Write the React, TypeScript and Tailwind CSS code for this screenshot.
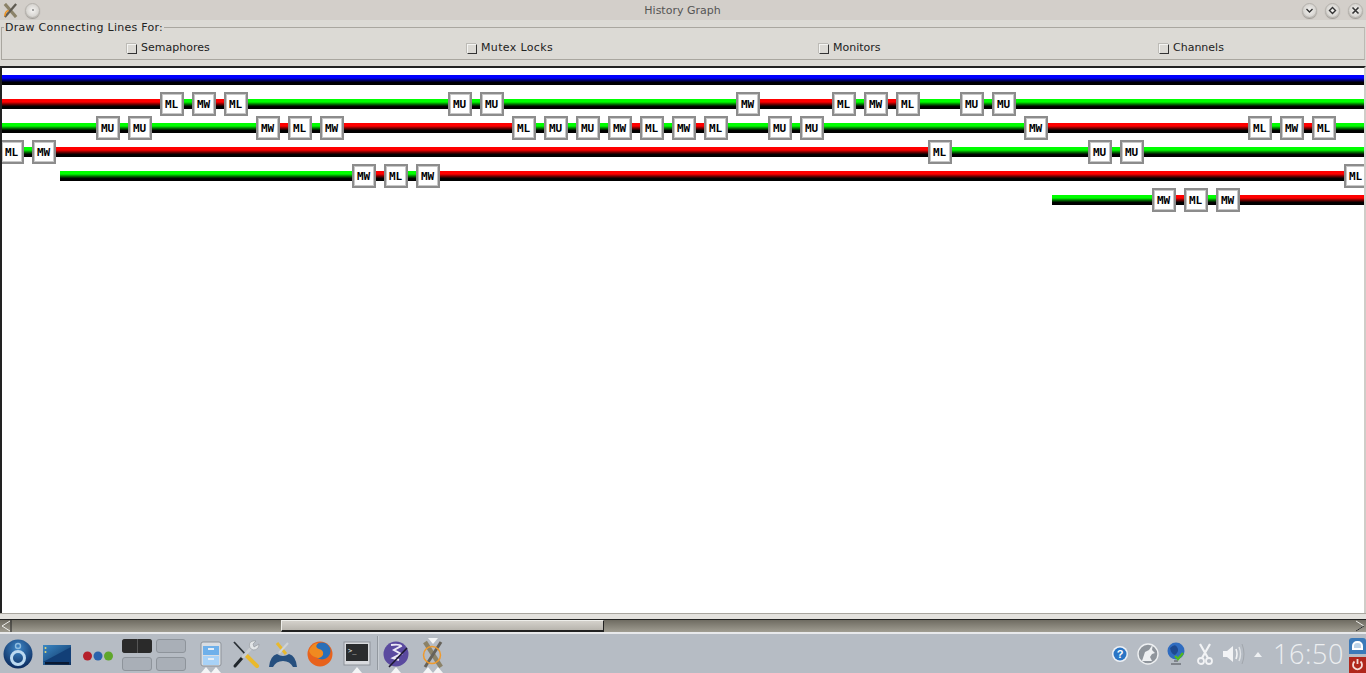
import React from 'react'

type Op = 'ML' | 'MW' | 'MU'
type Lane = { start: number; first: 'red' | 'green'; nodes: [Op, number][] }

const CANVAS_WIDTH = 1366

const lanes: Lane[] = [
  {
    start: 0,
    first: 'red',
    nodes: [['ML', 160], ['MW', 192], ['ML', 224], ['MU', 448], ['MU', 480], ['MW', 736], ['ML', 832], ['MW', 864], ['ML', 896], ['MU', 960], ['MU', 992]],
  },
  {
    start: 0,
    first: 'green',
    nodes: [['MU', 96], ['MU', 128], ['MW', 256], ['ML', 288], ['MW', 320], ['ML', 512], ['MU', 544], ['MU', 576], ['MW', 608], ['ML', 640], ['MW', 672], ['ML', 704], ['MU', 768], ['MU', 800], ['MW', 1024], ['ML', 1248], ['MW', 1280], ['ML', 1312]],
  },
  {
    start: 0,
    first: 'green',
    nodes: [['ML', 0], ['MW', 32], ['ML', 928], ['MU', 1088], ['MU', 1120]],
  },
  {
    start: 60,
    first: 'green',
    nodes: [['MW', 352], ['ML', 384], ['MW', 416], ['ML', 1344]],
  },
  {
    start: 1052,
    first: 'green',
    nodes: [['MW', 1152], ['ML', 1184], ['MW', 1216]],
  },
]

function LaneRow({ lane }: { lane: Lane }) {
  const segments: { left: number; width: number; color: string }[] = []
  let from = lane.start
  let color: string = lane.first
  for (const [op, x] of lane.nodes) {
    segments.push({ left: from, width: x - from, color })
    from = x
    color = op === 'MW' ? 'red' : 'green'
  }
  segments.push({ left: from, width: CANVAS_WIDTH - from, color })

  return (
    <div className="relative h-6 shrink-0">
      {segments.map((s) => (
        <div
          key={s.left}
          className={`absolute top-[7px] h-[10px] ${s.color === 'red' ? 'bg-linear-to-b from-[#ff0000] from-30% to-black to-80%' : 'bg-linear-to-b from-[#00ff00] from-30% to-black to-80%'}`}
          style={{ left: s.left, width: s.width }}
        />
      ))}
      {lane.nodes.map(([op, x]) => (
        <div
          key={x}
          className="absolute top-0 h-6 w-6 border-2 border-[#8c8c8c] bg-white"
          style={{ left: x }}
        >
          <div className="flex h-full w-full items-center justify-center border border-[#c8c8c8] pr-px font-['DejaVu_Sans_Mono',monospace] text-[11px] leading-none font-bold text-black">
            {op}
          </div>
        </div>
      ))}
    </div>
  )
}

function RoundButton({ children }: { children?: React.ReactNode }) {
  return (
    <div className="flex h-[15px] w-[15px] items-center justify-center rounded-full border border-[#b5b2ad] bg-radial from-[#f4f3f1] to-[#c9c6c1] shadow-[0_1px_1px_#9a9792]">
      {children}
    </div>
  )
}

function Option({ label, wide }: { label: string; wide?: boolean }) {
  return (
    <div className="flex items-center">
      <span className="mr-[4px] h-[10px] w-[10px] shrink-0 border border-t-[#f4f4f2] border-l-[#f4f4f2] border-r-[#333] border-b-[#333] bg-[#dcdad5] shadow-[-1px_-1px_0_#bdbbb6]" />
      <span className={wide ? 'tracking-[0.35px]' : ''}>{label}</span>
    </div>
  )
}

function AppX({ size = 16 }: { size?: number }) {
  return (
    <svg width={size} height={size} viewBox="0 0 16 16">
      <path d="M2 1 L14 15" stroke="#8b8268" strokeWidth="3.4" />
      <path d="M14 1 L2 15" stroke="#5f5b52" strokeWidth="2.4" />
      <path d="M2 14 Q2 9 6 8" stroke="#f0921e" strokeWidth="1.6" fill="none" />
    </svg>
  )
}

function Tri({ x, y = 0 }: { x: number; y?: number }) {
  return <path d={`M${x - 5} ${40 + y} L${x} ${34 + y} L${x + 5} ${40 + y} Z`} fill="#f4f5f6" />
}

function Taskbar() {
  return (
    <div className="h-[39px] shrink-0 bg-[#b6bcc4]">
      <div className="-mt-px flex h-10 items-center">
        <svg width="32" height="40" viewBox="0 0 32 40" className="ml-[2px] shrink-0">
          <defs>
            <radialGradient id="orb" cx="0.5" cy="0.3" r="0.7">
              <stop offset="0" stopColor="#3f88c8" />
              <stop offset="1" stopColor="#0a2a5e" />
            </radialGradient>
          </defs>
          <circle cx="16" cy="21" r="14.5" fill="url(#orb)" />
          <circle cx="16" cy="25" r="6.5" fill="none" stroke="#bcd9f0" strokeWidth="3" />
          <circle cx="16" cy="13" r="2.5" fill="none" stroke="#8fbde0" strokeWidth="1.4" />
        </svg>
        <svg width="30" height="40" viewBox="0 0 30 40" className="ml-[8px] shrink-0">
          <defs>
            <linearGradient id="desk" x1="0" y1="0" x2="1" y2="1">
              <stop offset="0" stopColor="#3a87c4" />
              <stop offset="1" stopColor="#0c2f5e" />
            </linearGradient>
          </defs>
          <rect x="1" y="12" width="28" height="20" fill="url(#desk)" />
          <path d="M1 29 L29 14 L29 29 Z" fill="#123f77" />
          <rect x="3" y="29" width="24" height="2.5" fill="#0a1a33" />
          <circle cx="3.5" cy="15" r="1" fill="#e0d77a" />
          <circle cx="3.5" cy="19" r="1" fill="#e0d77a" />
        </svg>
        <svg width="32" height="40" viewBox="0 0 32 40" className="ml-[10px] shrink-0">
          <circle cx="5.5" cy="23" r="4.5" fill="#b5202a" />
          <circle cx="16" cy="23" r="4.5" fill="#2c63ad" />
          <circle cx="26.5" cy="23" r="4.5" fill="#5fa62a" />
        </svg>
        <div className="mt-[4px] ml-[8px] grid w-[64px] shrink-0 grid-cols-2 gap-x-[4px] gap-y-[4px]">
          <div className="grid h-[14px] grid-cols-2 gap-px rounded-[3px] bg-[#555]">
            <div className="rounded-l-[3px] bg-[#2a2a2a]" />
            <div className="rounded-r-[3px] bg-[#2a2a2a]" />
          </div>
          <div className="h-[14px] rounded-[3px] border border-[#8e949b] bg-[#a9afb7]" />
          <div className="h-[14px] rounded-[3px] border border-[#8e949b] bg-[#a9afb7]" />
          <div className="h-[14px] rounded-[3px] border border-[#8e949b] bg-[#a9afb7]" />
        </div>
        <svg width="24" height="40" viewBox="0 0 24 40" className="ml-[13px] shrink-0">
          <rect x="2" y="9" width="20" height="24" rx="2" fill="#d9dde2" stroke="#8d9299" />
          <rect x="4" y="13" width="16" height="9" fill="#6fb0ea" />
          <rect x="4" y="23" width="16" height="9" fill="#a8d2f7" />
          <rect x="9" y="15" width="6" height="2" fill="#e6eef6" />
          <rect x="9" y="25" width="6" height="2" fill="#e6eef6" />
          <Tri x={7} />
          <Tri x={17} />
        </svg>
        <svg width="28" height="40" viewBox="0 0 28 40" className="ml-[9px] shrink-0">
          <path d="M2 9 L15 23" stroke="#2a3036" strokeWidth="1.8" />
          <path d="M15 23 L25 33" stroke="#e9b92c" strokeWidth="4" strokeLinecap="round" />
          <path d="M3 33 L10 25" stroke="#20262c" strokeWidth="3" strokeLinecap="round" />
          <path d="M10 25 L20 14" stroke="#c9cdd1" strokeWidth="3" />
          <path d="M18 15 Q16 9 21 8 L24 8 L21 11 L22 14 L27 11 Q27 17 21 17 Z" fill="#e2e5e7" stroke="#8f9398" strokeWidth="0.6" />
        </svg>
        <svg width="30" height="40" viewBox="0 0 30 40" className="ml-[8px] shrink-0">
          <path d="M1 34 Q2 23 9 21 Q15 25 21 21 Q28 23 29 34 L25 34 Q22 28 15 28 Q8 28 5 34 Z" fill="#27507f" />
          <path d="M9 10 L18 21" stroke="#e9b92c" strokeWidth="3" />
          <path d="M20 10 L11 20" stroke="#cfd3d6" strokeWidth="2" />
        </svg>
        <svg width="28" height="40" viewBox="0 0 28 40" className="ml-[8px] shrink-0">
          <circle cx="14" cy="21" r="12.5" fill="#e8621c" />
          <circle cx="16" cy="18" r="8.5" fill="#2a6fb8" />
          <path d="M3 18 Q6 10 12 10 Q8 14 13 16 Q18 17 17 22 Q14 27 9 24 Q5 23 3 18 Z" fill="#f08a20" />
        </svg>
        <svg width="28" height="40" viewBox="0 0 28 40" className="ml-[9px] shrink-0">
          <rect x="1" y="9" width="26" height="23" fill="#d8dade" stroke="#8d9299" />
          <rect x="3" y="11" width="22" height="17" fill="#2a2c2e" />
          <text x="5" y="20" fontSize="7" fill="#eee" fontFamily="'DejaVu Sans Mono',monospace">{'>_'}</text>
          <Tri x={14} />
        </svg>
        <div className="ml-[6px] h-[34px] w-[2px] shrink-0 border-l border-[#92989f] bg-[#c8cdd3]" />
        <svg width="26" height="40" viewBox="0 0 26 40" className="ml-[4px] shrink-0">
          <circle cx="13" cy="21" r="12.5" fill="#5a4a9f" />
          <path d="M8 12 Q17 11 18 13 L11 17 L18 21 L10 25 L16 27" stroke="#eceaf6" strokeWidth="2" fill="none" />
          <path d="M6 34 L24 15" stroke="#1c1830" strokeWidth="1.6" />
          <Tri x={13} />
        </svg>
        <svg width="28" height="40" viewBox="0 0 28 40" className="ml-[10px] shrink-0">
          <path d="M6 9 L22 34" stroke="#8b8268" strokeWidth="4.5" />
          <path d="M22 9 L6 34" stroke="#66625a" strokeWidth="3" />
          <circle cx="13" cy="22" r="8.5" fill="none" stroke="#ef9a2c" strokeWidth="1.5" />
          <path d="M9 5 L14 11 L19 5 Z" fill="#f4f5f6" />
          <Tri x={9} />
          <Tri x={19} />
        </svg>

        <div className="flex-1" />

        <svg width="18" height="40" viewBox="0 0 18 40" className="shrink-0">
          <circle cx="9" cy="21" r="8" fill="#eef1f5" />
          <circle cx="9" cy="21" r="6.5" fill="#2a75c5" />
          <text x="9" y="25" textAnchor="middle" fontSize="11" fontWeight="bold" fill="#fff" fontFamily="'Liberation Sans',sans-serif">?</text>
        </svg>
        <svg width="22" height="40" viewBox="0 0 22 40" className="ml-[8px] shrink-0">
          <circle cx="11" cy="21" r="10" fill="#8f959c" stroke="#eef0f2" strokeWidth="1.4" />
          <path d="M5 28 L8 19 L12 17 L16 11 L15 17 L18 20 L15 21 L13 24 L15 28 Z" fill="#eef0f2" />
        </svg>
        <svg width="20" height="40" viewBox="0 0 20 40" className="ml-[7px] shrink-0">
          <circle cx="10" cy="18" r="8.5" fill="#2f6cc0" />
          <path d="M4 15 Q9 10 11 14 Q14 18 9 22 Q5 21 4 15 Z" fill="#1e4a90" />
          <path d="M8 28 H12 M5 31 H15" stroke="#6d7278" strokeWidth="1.4" />
          <path d="M9 23 L12 26 L17 20" stroke="#4fb81e" strokeWidth="2.4" fill="none" />
        </svg>
        <svg width="18" height="40" viewBox="0 0 18 40" className="ml-[10px] shrink-0">
          <path d="M4 11 L12 25 M14 11 L6 25" stroke="#f2f3f5" strokeWidth="2.2" />
          <circle cx="5" cy="28" r="3" fill="none" stroke="#f2f3f5" strokeWidth="1.8" />
          <circle cx="13" cy="28" r="3" fill="none" stroke="#f2f3f5" strokeWidth="1.8" />
        </svg>
        <svg width="24" height="40" viewBox="0 0 24 40" className="ml-[8px] shrink-0">
          <path d="M1 18 H5 L11 13 V29 L5 24 H1 Z" fill="#f2f3f5" />
          <path d="M14 16 Q16 21 14 26" stroke="#f2f3f5" strokeWidth="1.6" fill="none" />
          <path d="M17 14 Q20 21 17 28" stroke="#e0e3e6" strokeWidth="1.4" fill="none" />
          <path d="M20 11 Q24 21 20 31" stroke="#a2a7ad" strokeWidth="1" fill="none" />
        </svg>
        <svg width="10" height="40" viewBox="0 0 10 40" className="ml-[7px] shrink-0">
          <path d="M1 24 L5 19 L9 24 Z" fill="#eef0f2" />
        </svg>
        <div className="ml-[10px] w-[74px] shrink-0 font-['Open_Sans',sans-serif] text-[27px] leading-none font-light tracking-[0.6px] whitespace-nowrap text-[#eceef0]">
          16:50
        </div>
        <div className="mt-[4px] ml-[2px] flex w-[17px] shrink-0 flex-col">
          <div className="flex h-[16px] items-center justify-center rounded-t-[3px] bg-[#3b79b8]">
            <div className="h-[9px] w-[11px] rounded-t-[5px] border-2 border-white bg-[#bcd3e8]" />
          </div>
          <div className="mt-[3px] flex h-[16px] items-center justify-center bg-[#b0271c]">
            <svg width="13" height="13" viewBox="0 0 13 13">
              <path d="M3.5 3.5 A4.5 4.5 0 1 0 9.5 3.5 M6.5 1 V6" stroke="#f5dcd8" strokeWidth="1.8" fill="none" />
            </svg>
          </div>
        </div>
      </div>
    </div>
  )
}

export default function App() {
  return (
    <div className="flex h-[673px] w-[1366px] flex-col overflow-hidden bg-[#dcdad5] font-['DejaVu_Sans',sans-serif] text-[11px] text-[#222]">
      {/* title bar */}
      <div className="flex h-5 shrink-0 items-center bg-[#d3cfca] px-[3px]">
        <AppX size={15} />
        <div className="ml-[7px]">
          <RoundButton>
            <div className="h-[2px] w-[2px] rounded-full bg-[#888]" />
          </RoundButton>
        </div>
        <div className="flex-1 pt-[2px] pl-[23px] text-center text-[#555]">History Graph</div>
        <div className="flex gap-2">
          <RoundButton>
            <svg width="9" height="9" viewBox="0 0 9 9"><path d="M1.5 3 L4.5 6 L7.5 3" stroke="#333" strokeWidth="1.4" fill="none" /></svg>
          </RoundButton>
          <RoundButton>
            <svg width="9" height="9" viewBox="0 0 9 9"><path d="M4.5 1.5 L7.5 4.5 L4.5 7.5 L1.5 4.5 Z" stroke="#333" strokeWidth="1.4" fill="none" /></svg>
          </RoundButton>
          <RoundButton>
            <svg width="9" height="9" viewBox="0 0 9 9"><path d="M1.5 1.5 L7.5 7.5 M7.5 1.5 L1.5 7.5" stroke="#333" strokeWidth="1.6" fill="none" /></svg>
          </RoundButton>
        </div>
      </div>

      {/* options */}
      <fieldset className="mx-[1px] h-[40px] shrink-0 border border-[#a9a69f] border-r-[#bdbab4]">
        <legend className="ml-[2px] px-[1px] pt-[1px] leading-[13px] tracking-[0.27px]">Draw Connecting Lines For:</legend>
        <div className="grid h-[25px] grid-cols-[340px_352px_340px_1fr] pt-[4px] pl-[125px]">
          <Option label="Semaphores" />
          <Option label="Mutex Locks" wide />
          <Option label="Monitors" />
          <Option label="Channels" />
        </div>
      </fieldset>

      {/* graph canvas */}
      <div className="mt-[6px] flex min-h-0 flex-1 flex-col overflow-hidden border-t-2 border-r-2 border-l-2 border-t-[#222] border-r-[#cfcdc8] border-l-[#222] bg-white pt-[7px]">
        <div className="mb-[7px] h-[10px] shrink-0 bg-linear-to-b from-[#0000ff] from-30% to-black to-80%" />
        <div className="-ml-[2px] flex flex-col">
          {lanes.map((lane) => (
            <LaneRow key={lane.start + lane.nodes[0][1]} lane={lane} />
          ))}
        </div>
      </div>

      {/* horizontal scrollbar */}
      <div className="h-[6px] shrink-0 border-t border-[#a9a69f] bg-[#e4e2de]" />
      <div className="flex h-[13px] shrink-0 items-stretch border-t border-[#222] bg-linear-to-b from-[#6f6c62] to-[#a09d92]">
        <svg width="12" height="12" viewBox="0 0 12 12" className="shrink-0">
          <path d="M10 1 L2 6 L10 11" stroke="#eeeeea" strokeWidth="1" fill="none" />
          <path d="M11 0 V12" stroke="#222" />
        </svg>
        <div className="w-[269px] shrink-0" />
        <div className="w-[323px] shrink-0 border-t border-r border-b-2 border-l border-t-[#eeeeea] border-r-[#222] border-b-[#222] border-l-[#eeeeea] bg-linear-to-b from-[#d4d1cb] to-[#b8b5ae]" />
        <div className="flex-1" />
        <svg width="12" height="12" viewBox="0 0 12 12" className="shrink-0">
          <path d="M2 1 L10 6 L2 11" stroke="#eeeeea" strokeWidth="1" fill="none" />
          <path d="M2 11 L10 6" stroke="#222" />
        </svg>
      </div>
      <div className="h-[2px] shrink-0 bg-[#e8e9eb]" />

      <Taskbar />
    </div>
  )
}
